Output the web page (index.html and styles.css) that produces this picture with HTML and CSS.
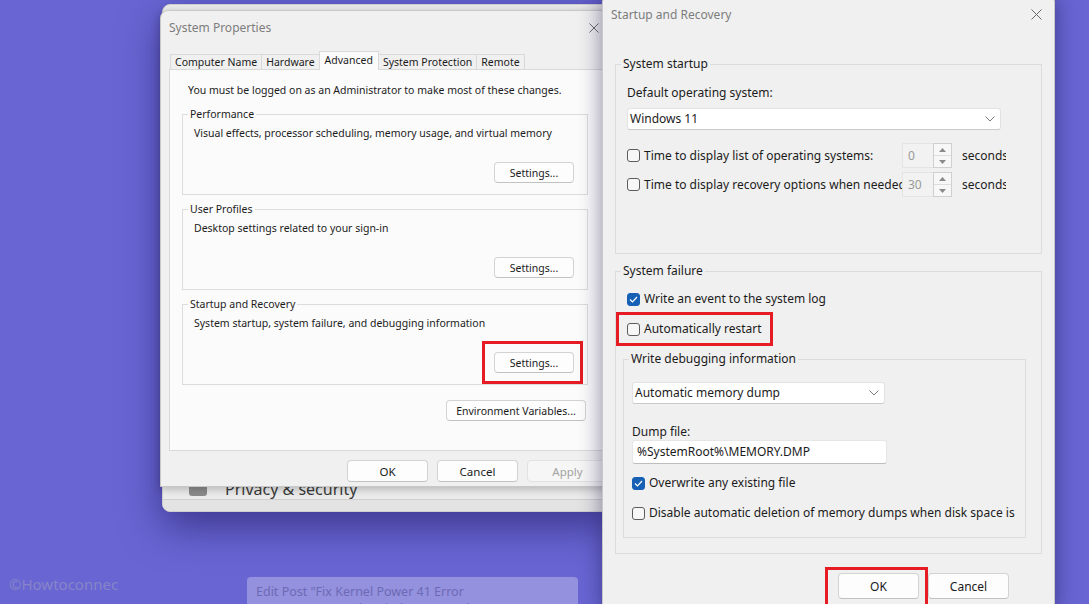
FILE: index.html
```html
<!DOCTYPE html>
<html lang="en">

<head>
    <meta charset="UTF-8">
    <meta name="viewport" content="width=device-width, initial-scale=1.0">
    <title>Startup and Recovery</title>
    <link rel="stylesheet" href="styles.css">
</head>

<body>
    <div class="desktop">

        <!-- settings app sitting behind the dialogs -->
        <div class="app-back">
            <div class="nav-item"><span class="nav-icon"></span>Privacy &amp; security</div>
            <div class="app-foot"></div>
        </div>

        <!-- System Properties -->
        <div class="window sysprops">
            <div class="titlebar">
                <span class="title">System Properties</span>
                <svg class="close" width="10" height="10" viewBox="0 0 10 10">
                    <path d="M0.5 0.5L9.5 9.5M9.5 0.5L0.5 9.5" stroke="#6b6b6b" stroke-width="1" fill="none" />
                </svg>
            </div>

            <div class="tabs">
                <span class="tab">Computer Name</span>
                <span class="tab">Hardware</span>
                <span class="tab active">Advanced</span>
                <span class="tab">System Protection</span>
                <span class="tab">Remote</span>
            </div>

            <div class="tab-panel">
                <p class="note">You must be logged on as an Administrator to make most of these changes.</p>

                <fieldset class="group">
                    <legend>Performance</legend>
                    <p>Visual effects, processor scheduling, memory usage, and virtual memory</p>
                    <button class="btn">Settings...</button>
                </fieldset>

                <fieldset class="group">
                    <legend>User Profiles</legend>
                    <p>Desktop settings related to your sign-in</p>
                    <button class="btn">Settings...</button>
                </fieldset>

                <fieldset class="group">
                    <legend>Startup and Recovery</legend>
                    <p>System startup, system failure, and debugging information</p>
                    <button class="btn marked mark-settings">Settings...</button>
                </fieldset>

                <button class="btn env-btn">Environment Variables...</button>
            </div>

            <div class="actions">
                <button class="btn">OK</button>
                <button class="btn">Cancel</button>
                <button class="btn" disabled>Apply</button>
            </div>
        </div>

        <!-- Startup and Recovery -->
        <div class="window startup">
            <div class="titlebar">
                <span class="title">Startup and Recovery</span>
                <svg class="close" width="11" height="11" viewBox="0 0 11 11">
                    <path d="M0.5 0.5L10.5 10.5M10.5 0.5L0.5 10.5" stroke="#6b6b6b" stroke-width="1" fill="none" />
                </svg>
            </div>

            <div class="dlg-body">
                <fieldset class="box sys-startup">
                    <legend>System startup</legend>
                    <div class="field-label">Default operating system:</div>
                    <div class="select os-select">
                        <span>Windows 11</span>
                        <svg width="10" height="6" viewBox="0 0 10 6">
                            <path d="M0.5 0.5L5 5L9.5 0.5" stroke="#7a7a7a" fill="none" />
                        </svg>
                    </div>

                    <div class="spin-row first">
                        <span class="check"></span>
                        <span class="spin-label">Time to display list of operating systems:</span>
                        <div class="spin">
                            <span class="spin-val">0</span>
                            <span class="spin-btns">
                                <span><svg width="7" height="4" viewBox="0 0 7 4"><path d="M3.5 0L7 4H0z" fill="#8a8a8a" /></svg></span>
                                <span><svg width="7" height="4" viewBox="0 0 7 4"><path d="M0 0H7L3.5 4z" fill="#8a8a8a" /></svg></span>
                            </span>
                        </div>
                        <span class="unit">seconds</span>
                    </div>

                    <div class="spin-row">
                        <span class="check"></span>
                        <span class="spin-label">Time to display recovery options when needed:</span>
                        <div class="spin">
                            <span class="spin-val">30</span>
                            <span class="spin-btns">
                                <span><svg width="7" height="4" viewBox="0 0 7 4"><path d="M3.5 0L7 4H0z" fill="#8a8a8a" /></svg></span>
                                <span><svg width="7" height="4" viewBox="0 0 7 4"><path d="M0 0H7L3.5 4z" fill="#8a8a8a" /></svg></span>
                            </span>
                        </div>
                        <span class="unit">seconds</span>
                    </div>
                </fieldset>

                <fieldset class="box sys-failure">
                    <legend>System failure</legend>

                    <div class="check-row event-row">
                        <span class="check on"><svg width="9" height="7" viewBox="0 0 9 7"><path d="M1 3.5L3.5 6L8 1" stroke="#fff" stroke-width="1.2" fill="none" /></svg></span>
                        <span>Write an event to the system log</span>
                    </div>

                    <div class="check-row restart-row marked mark-restart">
                        <span class="check"></span>
                        <span>Automatically restart</span>
                    </div>

                    <fieldset class="box debug">
                        <legend>Write debugging information</legend>
                        <div class="select dump-select">
                            <span>Automatic memory dump</span>
                            <svg width="10" height="6" viewBox="0 0 10 6">
                                <path d="M0.5 0.5L5 5L9.5 0.5" stroke="#7a7a7a" fill="none" />
                            </svg>
                        </div>

                        <div class="field-label dump-label">Dump file:</div>
                        <div class="textbox">%SystemRoot%\MEMORY.DMP</div>

                        <div class="check-row overwrite-row">
                            <span class="check on"><svg width="9" height="7" viewBox="0 0 9 7"><path d="M1 3.5L3.5 6L8 1" stroke="#fff" stroke-width="1.2" fill="none" /></svg></span>
                            <span>Overwrite any existing file</span>
                        </div>

                        <div class="check-row disable-row">
                            <span class="check"></span>
                            <span class="clip">Disable automatic deletion of memory dumps when disk space is low</span>
                        </div>
                    </fieldset>
                </fieldset>

                <div class="dlg-actions">
                    <button class="btn marked mark-ok">OK</button>
                    <button class="btn">Cancel</button>
                </div>
            </div>
        </div>

        <div class="watermark">&copy;Howtoconnec</div>

        <div class="toast">
            Edit Post "Fix Kernel Power 41 Error<br>
            0x000000000000 in Windows 11 and 10"
        </div>
    </div>
</body>

</html>
```

FILE: styles.css
```css
* {
    box-sizing: border-box;
}

body {
    margin: 0;
    font-family: "Noto Sans", "Liberation Sans", sans-serif;
    color: #1b1b1b;
    background-color: #6966d4;
}

.desktop {
    position: relative;
    width: 1089px;
    height: 604px;
    overflow: hidden;
    background-color: #6966d4;
}

/* ---------- settings app behind ---------- */

.app-back {
    position: absolute;
    left: 162px;
    top: 4px;
    width: 452px;
    height: 508px;
    background-color: #ececec;
    border: 1px solid #cfcfcf;
    border-radius: 8px;
    box-shadow: 0 14px 40px rgba(28, 22, 90, 0.6);
    display: flex;
    flex-direction: column;
    justify-content: flex-end;
    overflow: hidden;
}

.nav-item {
    height: 18px;
    display: flex;
    align-items: flex-start;
    padding-left: 26px;
    font-size: 16px;
    line-height: 16px;
    color: #3a3a3a;
    gap: 18px;
}

.nav-icon {
    width: 18px;
    height: 14px;
    margin-top: 1px;
    border-radius: 3px;
    background-color: #8c8c8c;
}

.app-foot {
    height: 12px;
    border-top: 1px solid #cfcfcf;
    background-color: #e3e3e3;
}

/* ---------- shared window bits ---------- */

.window {
    position: absolute;
    background-color: #f0f0f0;
    border: 1px solid #c8c8c8;
    border-radius: 8px 8px 0 0;
}

.titlebar {
    display: flex;
    align-items: center;
    justify-content: space-between;
}

.title {
    color: #7d7d7d;
}

.btn {
    font-family: inherit;
    color: #1b1b1b;
    background-color: #fdfdfd;
    border: 1px solid #d3d3d3;
    border-bottom-color: #c2c2c2;
    border-radius: 4px;
    padding: 0;
    margin: 0;
}

.btn:disabled {
    color: #a3a3a3;
    background-color: #f6f6f6;
    border-color: #e2e2e2;
}

fieldset {
    margin: 0;
    min-width: 0;
    border: 1px solid #dcdcdc;
}

legend {
    padding: 0 2px;
    margin-left: -6px;
}

/* red annotation frames */
.marked {
    position: relative;
}

.marked::after {
    content: "";
    position: absolute;
    border: 3px solid #e51c23;
}

.mark-settings::after {
    left: -13px;
    right: -10px;
    top: -12px;
    bottom: -12px;
}

.mark-restart::after {
    left: -11px;
    right: -14px;
    top: -9px;
    bottom: -9px;
}

.mark-ok::after {
    left: -14px;
    right: -10px;
    top: -7px;
    bottom: -9px;
}

/* ---------- System Properties ---------- */

.sysprops {
    left: 160px;
    top: 10px;
    width: 458px;
    height: 477px;
    font-size: 10.5px;
    box-shadow: 0 2px 8px rgba(0, 0, 0, 0.25);
}

.sysprops .titlebar {
    height: 33px;
    padding: 0 14px 0 8px;
    font-size: 12px;
}

.sysprops .close {
    margin-right: 4px;
}

.tabs {
    display: flex;
    align-items: flex-end;
    height: 19px;
    margin: 6px 0 0 9px;
    position: relative;
    z-index: 1;
}

.tab {
    height: 15px;
    line-height: 14px;
    padding: 0 4px;
    border: 1px solid #d9d9d9;
    border-bottom: none;
    margin-right: -1px;
    background-color: #f0f0f0;
}

.tab.active {
    height: 19px;
    line-height: 16px;
    background-color: #fbfbfb;
    margin-bottom: -1px;
    padding: 0 5px;
}

.tab-panel {
    height: 382px;
    margin: 0 8px;
    border: 1px solid #d9d9d9;
    background-color: #fbfbfb;
    display: flex;
    flex-direction: column;
    align-items: stretch;
}

.note {
    margin: 14px 0 0 18px;
    line-height: 13px;
    white-space: nowrap;
}

.group {
    margin: 11px 20px 0 12px;
    padding: 0 13px 11px 11px;
    display: flex;
    flex-direction: column;
    align-items: flex-end;
    line-height: 13px;
}

.group + .group {
    margin-top: 8px;
}

.group legend {
    line-height: 13px;
}

.group p {
    align-self: stretch;
    margin: 6px 0 0;
    white-space: nowrap;
}

.group .btn {
    width: 80px;
    height: 21px;
    margin-top: 22px;
    font-size: 10.5px;
}

.env-btn {
    align-self: flex-end;
    width: 140px;
    height: 21px;
    margin: 15px 22px 0 0;
    font-size: 10.5px;
}

.actions {
    display: flex;
    justify-content: flex-end;
    gap: 9px;
    padding-right: 9px;
    margin-top: 9px;
}

.actions .btn {
    width: 81px;
    height: 22px;
    font-size: 11.5px;
}

/* ---------- Startup and Recovery ---------- */

.startup {
    left: 602px;
    top: -6px;
    width: 453px;
    height: 620px;
    font-size: 12px;
    box-shadow: 0 0 22px rgba(22, 18, 70, 0.5);
}

.startup .titlebar {
    height: 38px;
    padding: 0 12px 0 8px;
}

.dlg-body {
    padding: 0 12px;
}

.box legend {
    line-height: 16px;
}

.sys-startup {
    margin-top: 23px;
    padding: 0 12px 56px 11px;
    line-height: 16px;
}

.field-label {
    margin-top: 13px;
    line-height: 16px;
}

.select {
    display: flex;
    align-items: center;
    justify-content: space-between;
    height: 22px;
    background-color: #fff;
    border: 1px solid #e2e2e2;
    border-bottom-color: #cacaca;
    border-radius: 3px;
    padding: 0 5px 0 2px;
}

.os-select {
    width: 374px;
    margin-top: 7px;
}

.check {
    flex: none;
    width: 13px;
    height: 13px;
    border: 1px solid #5c5c5c;
    border-radius: 3px;
    background-color: #f7f7f7;
    display: flex;
    align-items: center;
    justify-content: center;
}

.check.on {
    background-color: #1660b6;
    border-color: #1660b6;
}

.spin-row {
    display: flex;
    align-items: center;
    height: 25px;
    margin-top: 4px;
}

.spin-row.first {
    margin-top: 13px;
}

.spin-label {
    width: 262px;
    padding-left: 4px;
    overflow: hidden;
    white-space: nowrap;
}

.spin {
    display: flex;
    width: 50px;
    height: 25px;
}

.spin-val {
    width: 31px;
    padding-left: 5px;
    line-height: 23px;
    color: #9a9a9a;
    border: 1px solid #e4e4e4;
    border-right: none;
    background-color: #f2f2f2;
}

.spin-btns {
    width: 19px;
    display: flex;
    flex-direction: column;
    border: 1px solid #d0d0d0;
    background-color: #f7f7f7;
}

.spin-btns span {
    flex: 1;
    display: flex;
    align-items: center;
    justify-content: center;
}

.spin-btns span + span {
    border-top: 1px solid #dedede;
}

.unit {
    width: 44px;
    margin-left: 10px;
    overflow: hidden;
    white-space: nowrap;
}

.sys-failure {
    margin-top: 9px;
    padding: 0 15px 15px 11px;
    line-height: 16px;
}

.check-row {
    display: flex;
    align-items: center;
    gap: 4px;
    height: 16px;
    white-space: nowrap;
}

.event-row {
    margin-top: 12px;
}

.restart-row {
    margin-top: 14px;
    width: 132px;
}

.debug {
    margin: 14px 0 0 -4px;
    padding: 0 8px 16px 8px;
}

.debug legend {
    margin-left: -3px;
}

.dump-select {
    width: 253px;
    margin-top: 15px;
}

.dump-label {
    margin-top: 20px;
}

.textbox {
    width: 255px;
    height: 24px;
    line-height: 22px;
    padding-left: 4px;
    background-color: #fff;
    border: 1px solid #e6e6e6;
    border-bottom-color: #bdbdbd;
    border-radius: 3px;
}

.overwrite-row {
    margin-top: 11px;
}

.disable-row {
    margin-top: 14px;
}

.clip {
    width: 369px;
    overflow: hidden;
}

.dlg-actions {
    display: flex;
    justify-content: flex-end;
    gap: 9px;
    margin-top: 19px;
    padding-right: 33px;
}

.dlg-actions .btn {
    width: 81px;
    height: 26px;
    font-size: 12px;
}

/* ---------- desktop leftovers ---------- */

.watermark {
    position: absolute;
    left: 9px;
    top: 574px;
    font-size: 15px;
    color: #8784c7;
}

.toast {
    position: absolute;
    left: 247px;
    top: 577px;
    width: 331px;
    height: 44px;
    padding: 6px 9px;
    border-radius: 4px;
    background-color: #9491de;
    color: #6d6ab5;
    font-size: 12.5px;
    line-height: 17px;
}
```
